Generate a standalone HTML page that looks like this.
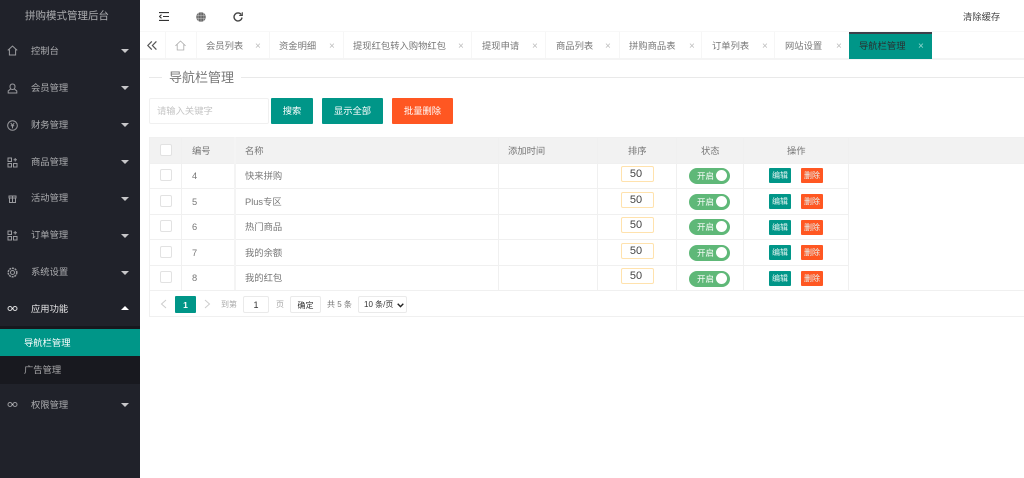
<!DOCTYPE html>
<html lang="zh"><head><meta charset="utf-8"><title>导航栏管理</title>
<style>
*{box-sizing:border-box}
html,body{margin:0;padding:0;width:1024px;height:478px;overflow:hidden;background:#fff;font-family:"Liberation Sans","Noto Sans CJK SC",sans-serif;}
.a{position:absolute;white-space:nowrap}
#side{left:0;top:0;width:140px;height:478px;background:#20222a}
.mi{position:absolute;left:31px;font-size:9.3px;line-height:14px;color:rgba(255,255,255,.62);white-space:nowrap}
.ar{position:absolute;left:121px;width:0;height:0;border:4.500px solid transparent;border-top:4px solid rgba(255,255,255,.75);border-bottom:0}
.ic{position:absolute;left:7px;width:11px;height:11px;fill:none;stroke:rgba(255,255,255,.55);stroke-width:1}
.tab{position:absolute;top:32px;height:26px;border-right:1px solid #f6f6f6;font-size:9.300px;line-height:28px;color:#777;white-space:nowrap}
.tab b{position:absolute;font-weight:400;font-size:10px;color:#bbb;top:1px}
.btn{position:absolute;top:98px;height:26px;line-height:26px;text-align:center;font-size:9.300px;color:#fff;background:#009688;border-radius:1px}
.hl,.vl{position:absolute;background:#f0f0f0}
.t{position:absolute;font-size:9.300px;line-height:14px;color:#777;white-space:nowrap}
.cb{position:absolute;left:160px;width:12px;height:12px;border:1px solid #e2e2e2;border-radius:2px;background:#fff}
.inp{position:absolute;left:621px;width:33px;height:16px;border:1px solid #ffe2ad;border-radius:2px;text-align:center;padding-right:3px;font-size:11px;line-height:14px;color:#444;background:#fff}
.sw{position:absolute;left:689px;width:41px;height:16px;border-radius:9px;background:#5fb878;color:#fff;font-size:8.500px;line-height:17px;padding-left:8px}
.sw i{position:absolute;right:3px;top:2px;width:11px;height:11px;border-radius:50%;background:#fff}
.e,.d{position:absolute;width:22px;height:15px;font-size:8px;line-height:16px;text-align:center;color:#e6f5f3;border-radius:1px}
.e{left:769px;background:#009688}.d{left:801px;background:#ff5722}
.pg{position:absolute;font-size:8px;line-height:14px;color:#777;white-space:nowrap}
</style></head><body>

<div class="a" id="side">
<div class="a" style="left:25px;top:9px;font-size:10.500px;line-height:15px;color:rgba(255,255,255,.62)">拼购模式管理后台</div>

<svg class="ic" style="top:45px" viewBox="0 0 11 11"><path d="M.8 5.400 5.500 1l4.700 4.400M2.400 4.400V10h6.200V4.400"/></svg>
<div class="mi" style="top:44px">控制台</div><div class="ar" style="top:49px"></div>

<svg class="ic" style="top:83px" viewBox="0 0 11 11"><path d="M5.500 1C7.300 1 8 2.300 8 3.800S7 6.500 5.500 6.500 3 5.300 3 3.800 3.700 1 5.500 1ZM3.600 6 1.200 8v2h8.600V8L7.400 6"/></svg>
<div class="mi" style="top:81px">会员管理</div><div class="ar" style="top:86px"></div>

<svg class="ic" style="top:120px" viewBox="0 0 11 11"><circle cx="5.500" cy="5.500" r="4.800"/><path d="M3.800 3 5.500 5.400 7.200 3M5.500 5.400V8.400M3.800 5.800h3.400"/></svg>
<div class="mi" style="top:118px">财务管理</div><div class="ar" style="top:123px"></div>

<svg class="ic" style="top:157px" viewBox="0 0 11 11"><path d="M1 1h3.500v3.500H1zM1 6.500h3.500V10H1zM6.500 6.500H10V10H6.500zM8.200 1v3.500M6.500 2.700H10"/></svg>
<div class="mi" style="top:155px">商品管理</div><div class="ar" style="top:160px"></div>

<svg class="ic" style="top:193px" viewBox="0 0 11 11"><path d="M2 3h7v2H2zM2.500 5v4.500h6V5M5.500 3v6.500" /></svg>
<div class="mi" style="top:191px">活动管理</div><div class="ar" style="top:197px"></div>

<svg class="ic" style="top:230px" viewBox="0 0 11 11"><path d="M1 1h3.500v3.500H1zM1 6.500h3.500V10H1zM6.500 6.500H10V10H6.500zM8.200 1v3.500M6.500 2.700H10"/></svg>
<div class="mi" style="top:228px">订单管理</div><div class="ar" style="top:234px"></div>

<svg class="ic" style="top:267px" viewBox="0 0 11 11"><circle cx="5.500" cy="5.500" r="2"/><circle cx="5.500" cy="5.500" r="4.300" stroke-dasharray="2 .8" stroke-width="1.500"/></svg>
<div class="mi" style="top:265px">系统设置</div><div class="ar" style="top:271px"></div>

<svg class="ic" style="top:303px;stroke:rgba(255,255,255,.85)" viewBox="0 0 11 11"><circle cx="3" cy="5.500" r="2"/><circle cx="8" cy="5.500" r="2"/><path d="M5 5.500h1"/></svg>
<div class="mi" style="top:302px;color:rgba(255,255,255,.9)">应用功能</div>
<div class="ar" style="top:306px;border-top:0;border-bottom:4px solid #fff"></div>

<div class="a" style="left:0;top:326px;width:140px;height:3px;background:#17181d"></div>
<div class="a" style="left:0;top:329px;width:140px;height:27px;background:#009688"></div>
<div class="mi" style="left:24px;top:336px;color:#fff">导航栏管理</div>
<div class="a" style="left:0;top:356px;width:140px;height:28px;background:#18191f"></div>
<div class="mi" style="left:24px;top:363px">广告管理</div>

<svg class="ic" style="top:399px" viewBox="0 0 11 11"><circle cx="3" cy="5.500" r="2"/><circle cx="8" cy="5.500" r="2"/><path d="M5 5.500h1"/></svg>
<div class="mi" style="top:398px">权限管理</div><div class="ar" style="top:403px"></div>
</div>

<!-- top bar -->
<svg class="a" style="left:159px;top:12px;width:10px;height:9px" viewBox="0 0 10 9" fill="none" stroke="#333" stroke-width="1.100"><path d="M0 .6h10M4 4.500h6M0 8.400h10M2.500 2.700 .5 4.500l2 1.800"/></svg>
<svg class="a" style="left:196px;top:12px;width:10px;height:10px" viewBox="0 0 10 10" fill="#666" stroke="#ddd" stroke-width=".4"><circle cx="5" cy="5" r="4.900"/><path d="M0 3.500h10M0 6.500h10M5 0v10M2.800 1c-1 2.500-1 5.500 0 8M7.200 1c1 2.500 1 5.500 0 8" fill="none"/></svg>
<svg class="a" style="left:233px;top:12px;width:10px;height:10px" viewBox="0 0 10 10" fill="none" stroke="#444" stroke-width="1.400"><path d="M8.300 2.600A4 4 0 1 0 9 5.500"/><path d="M9.300 .2v3.200H6.200" stroke-width="1.100"/></svg>
<div class="a" style="left:963px;top:10px;font-size:9.300px;line-height:14px;color:#444">清除缓存</div>

<!-- tabs -->
<div class="a" style="left:140px;top:31px;width:884px;height:1px;background:#f8f8f8"></div>
<div class="a" style="left:140px;top:58px;width:884px;height:2px;background:#f4f4f4"></div>
<svg class="a" style="left:147px;top:41px;width:10px;height:9px" viewBox="0 0 10 9" fill="none" stroke="#555" stroke-width="1.200"><path d="M4.800 .4 .8 4.500 4.800 8.600M9.400 .4 5.400 4.500 9.400 8.600"/></svg>
<div class="tab" style="left:140px;width:26px"></div>
<svg class="a" style="left:175px;top:40px;width:11px;height:11px" viewBox="0 0 11 11" fill="none" stroke="#aaa" stroke-width=".8"><path d="M.5 5.800 5.500 1l5 4.800M2.200 4.500V10h6.600V4.500"/></svg>
<div class="tab" style="left:166px;width:31px"></div>
<div class="tab" style="left:197px;width:73px"><span style="position:absolute;left:9px">会员列表</span><b style="left:58px">×</b></div>
<div class="tab" style="left:270px;width:74px"><span style="position:absolute;left:9px">资金明细</span><b style="left:59px">×</b></div>
<div class="tab" style="left:344px;width:128px"><span style="position:absolute;left:9px">提现红包转入购物红包</span><b style="left:114px">×</b></div>
<div class="tab" style="left:472px;width:74px"><span style="position:absolute;left:10px">提现申请</span><b style="left:60px">×</b></div>
<div class="tab" style="left:546px;width:74px"><span style="position:absolute;left:10px">商品列表</span><b style="left:59px">×</b></div>
<div class="tab" style="left:620px;width:82px"><span style="position:absolute;left:9px">拼购商品表</span><b style="left:69px">×</b></div>
<div class="tab" style="left:702px;width:73px"><span style="position:absolute;left:10px">订单列表</span><b style="left:60px">×</b></div>
<div class="tab" style="left:775px;width:74px;border:0"><span style="position:absolute;left:10px">网站设置</span><b style="left:61px">×</b></div>
<div class="a" style="left:849px;top:32px;width:83px;height:27px;background:#009688;border-top:2px solid #3f3f4a"></div>
<div class="a" style="left:859px;top:39px;font-size:9.300px;line-height:14px;color:#2a2f30">导航栏管理</div>
<div class="a" style="left:918px;top:40px;font-size:10px;line-height:14px;color:#9adbd3">×</div>

<!-- title -->
<div class="a" style="left:149px;top:77px;width:13px;height:1px;background:#e9e9e9"></div>
<div class="a" style="left:241px;top:77px;width:783px;height:1px;background:#e9e9e9"></div>
<div class="a" style="left:169px;top:69px;font-size:13px;line-height:18px;color:#777">导航栏管理</div>

<!-- toolbar -->
<div class="a" style="left:149px;top:98px;width:120px;height:26px;border:1px solid #f0f0f0;border-radius:2px;font-size:9.300px;line-height:24px;padding-left:7px;color:#c4c4c4">请输入关键字</div>
<div class="btn" style="left:271px;width:42px">搜索</div>
<div class="btn" style="left:322px;width:61px">显示全部</div>
<div class="btn" style="left:392px;width:61px;background:#ff5722">批量删除</div>

<!-- table -->
<div class="a" style="left:149px;top:137px;width:875px;height:26px;background:#f2f2f2"></div>
<div class="hl" style="left:149px;top:137px;width:875px;height:1px"></div>
<div class="hl" style="left:149px;top:163px;width:875px;height:1px"></div>
<div class="hl" style="left:149px;top:188px;width:700px;height:1px"></div>
<div class="hl" style="left:149px;top:214px;width:700px;height:1px"></div>
<div class="hl" style="left:149px;top:239px;width:700px;height:1px"></div>
<div class="hl" style="left:149px;top:265px;width:700px;height:1px"></div>
<div class="hl" style="left:149px;top:290px;width:875px;height:1px"></div>
<div class="hl" style="left:149px;top:316px;width:875px;height:1px"></div>
<div class="vl" style="left:149px;top:137px;width:1px;height:180px"></div>
<div class="vl" style="left:181px;top:137px;width:1px;height:153px"></div>
<div class="vl" style="left:234px;top:137px;width:2px;height:153px;background:#f4f4f4"></div>
<div class="vl" style="left:498px;top:137px;width:1px;height:153px"></div>
<div class="vl" style="left:597px;top:137px;width:1px;height:153px"></div>
<div class="vl" style="left:676px;top:137px;width:1px;height:153px"></div>
<div class="vl" style="left:743px;top:137px;width:1px;height:153px"></div>
<div class="vl" style="left:848px;top:137px;width:1px;height:153px"></div>

<div class="cb" style="top:144px"></div>
<div class="t" style="left:192px;top:144px">编号</div>
<div class="t" style="left:245px;top:144px">名称</div>
<div class="t" style="left:508px;top:144px">添加时间</div>
<div class="t" style="left:628px;top:144px">排序</div>
<div class="t" style="left:701px;top:144px">状态</div>
<div class="t" style="left:787px;top:144px">操作</div>

<div class="cb" style="top:169px"></div><div class="t" style="left:192px;top:169px">4</div><div class="t" style="left:245px;top:169px">快来拼购</div>
<div class="inp" style="top:166px">50</div><div class="sw" style="top:168px">开启<i></i></div><div class="e" style="top:168px">编辑</div><div class="d" style="top:168px">删除</div>

<div class="cb" style="top:195px"></div><div class="t" style="left:192px;top:195px">5</div><div class="t" style="left:245px;top:195px">Plus专区</div>
<div class="inp" style="top:192px">50</div><div class="sw" style="top:194px">开启<i></i></div><div class="e" style="top:194px">编辑</div><div class="d" style="top:194px">删除</div>

<div class="cb" style="top:220px"></div><div class="t" style="left:192px;top:220px">6</div><div class="t" style="left:245px;top:220px">热门商品</div>
<div class="inp" style="top:217px">50</div><div class="sw" style="top:219px">开启<i></i></div><div class="e" style="top:220px">编辑</div><div class="d" style="top:220px">删除</div>

<div class="cb" style="top:246px"></div><div class="t" style="left:192px;top:246px">7</div><div class="t" style="left:245px;top:246px">我的余额</div>
<div class="inp" style="top:243px">50</div><div class="sw" style="top:245px">开启<i></i></div><div class="e" style="top:245px">编辑</div><div class="d" style="top:245px">删除</div>

<div class="cb" style="top:271px"></div><div class="t" style="left:192px;top:271px">8</div><div class="t" style="left:245px;top:271px">我的红包</div>
<div class="inp" style="top:268px">50</div><div class="sw" style="top:271px">开启<i></i></div><div class="e" style="top:271px">编辑</div><div class="d" style="top:271px">删除</div>

<!-- pager -->
<svg class="a" style="left:160px;top:299px;width:7px;height:10px" viewBox="0 0 7 10" fill="none" stroke="#ccc"><path d="M6 1 1.500 5 6 9"/></svg>
<div class="a" style="left:175px;top:296px;width:21px;height:17px;background:#009688;border-radius:1px;color:#fff;font-size:8.500px;font-weight:700;line-height:18px;text-align:center">1</div>
<svg class="a" style="left:204px;top:299px;width:7px;height:10px" viewBox="0 0 7 10" fill="none" stroke="#ccc"><path d="M1 1 5.500 5 1 9"/></svg>
<div class="pg" style="left:221px;top:298px;color:#aaa">到第</div>
<div class="a" style="left:243px;top:296px;width:26px;height:17px;border:1px solid #eaeaea;border-radius:2px;font-size:9px;line-height:16px;text-align:center;color:#333">1</div>
<div class="pg" style="left:276px;top:298px;color:#aaa">页</div>
<div class="a" style="left:290px;top:296px;width:31px;height:17px;border:1px solid #eaeaea;border-radius:2px;font-size:8px;line-height:17px;text-align:center;color:#333">确定</div>
<div class="pg" style="left:327px;top:298px">共 5 条</div>
<div class="a" style="left:358px;top:296px;width:49px;height:17px;border:1px solid #eaeaea;border-radius:2px;font-size:8px;line-height:16px;padding-left:5px;color:#333">10 条/页</div>
<svg class="a" style="left:397px;top:303px;width:7px;height:5px" viewBox="0 0 7 5" fill="none" stroke="#222" stroke-width="1.400"><path d="M.7 .8 3.500 3.600 6.300 .8"/></svg>
</body></html>
